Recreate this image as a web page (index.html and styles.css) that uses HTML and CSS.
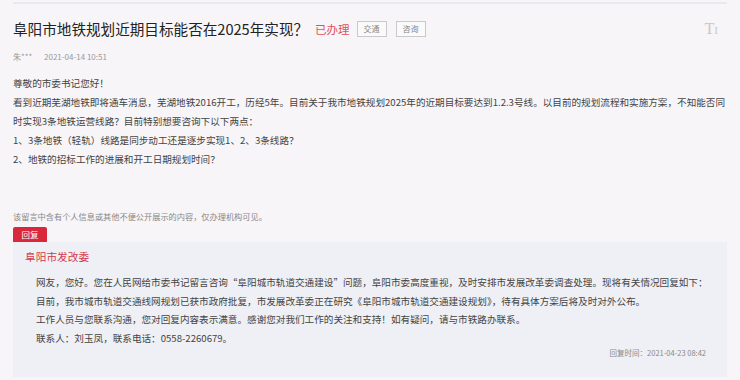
FILE: index.html
```html
<!DOCTYPE html>
<html lang="zh-CN">
<head>
<meta charset="UTF-8" />
<title>阜阳市地铁规划近期目标能否在2025年实现？</title>
<link rel="stylesheet" href="styles.css">
</head>
<body>

<div class="page">
    <div class="topline"></div>

    <div class="head">
        <h1 class="title">阜阳市地铁规划近期目标能否在2025年实现？</h1>
        <span class="status">已办理</span>
        <span class="tag">交通</span>
        <span class="tag">咨询</span>
        <span class="fontsize">T<small>I</small></span>
    </div>

    <div class="meta">
        <span class="author">朱***</span>
        <span class="date">2021-04-14 10:51</span>
    </div>

    <div class="content">
        <p>尊敬的市委书记您好！</p>
        <p>看到近期芜湖地铁即将通车消息，芜湖地铁2016开工，历经5年。目前关于我市地铁规划2025年的近期目标要达到1.2.3号线。以目前的规划流程和实施方案，不知能否同时实现3条地铁运营线路？目前特别想要咨询下以下两点：</p>
        <p>1、3条地铁（轻轨）线路是同步动工还是逐步实现1、2、3条线路？</p>
        <p>2、地铁的招标工作的进展和开工日期规划时间？</p>
    </div>

    <div class="notice">该留言中含有个人信息或其他不便公开展示的内容，仅办理机构可见。</div>

    <div class="tab">回复</div>
    <div class="reply">
        <div class="org">阜阳市发改委</div>
        <div class="reply-text">
            <p>网友，您好。您在人民网给市委书记留言咨询“阜阳城市轨道交通建设”问题，阜阳市委高度重视，及时安排市发展改革委调查处理。现将有关情况回复如下：</p>
            <p>目前，我市城市轨道交通线网规划已获市政府批复，市发展改革委正在研究《阜阳市城市轨道交通建设规划》，待有具体方案后将及时对外公布。</p>
            <p>工作人员与您联系沟通，您对回复内容表示满意。感谢您对我们工作的关注和支持！如有疑问，请与市铁路办联系。</p>
            <p>联系人：刘玉凤，联系电话：0558-2260679。</p>
        </div>
        <div class="reply-time">回复时间：2021-04-23 08:42</div>
    </div>
</div>

</body>
</html>
```

FILE: styles.css
```css
body {
    margin: 0;
    background: #f7f5f8;
    color: #333;
    font-family: "Noto Sans CJK SC", "Noto Sans", sans-serif;
}
.page {
    padding: 0 13px;
}
.topline {
    margin-top: 2px;
    height: 2px;
    background: #ebe9ed;
}
.head {
    display: flex;
    align-items: center;
    margin-top: 15px;
    height: 20px;
}
.title {
    margin: 0;
    font-size: 14.6px;
    font-weight: normal;
    color: #222;
    line-height: 20px;
}
.status {
    margin-left: 7px;
    font-size: 11.5px;
    color: #e2515b;
}
.tag {
    margin-left: 7px;
    padding: 0 6px;
    height: 14px;
    line-height: 14px;
    border: 1px solid #c9c9c9;
    font-size: 8px;
    color: #888;
    background: #fafafa;
}
.tag + .tag {
    margin-left: 9px;
}
.fontsize {
    margin-left: auto;
    margin-right: 9px;
    font-family: "Liberation Serif", serif;
    font-size: 16px;
    color: #c8c8c8;
    line-height: 1;
}
.fontsize small {
    font-size: 11px;
}
.meta {
    margin-top: 11px;
    font-size: 8px;
    line-height: 14px;
    color: #999;
}
.meta .date {
    margin-left: 10px;
}
.content {
    margin-top: 10px;
    font-size: 9.6px;
    line-height: 19px;
    color: #444;
}
.content p {
    margin: 0;
}
.notice {
    margin-top: 40px;
    font-size: 8.2px;
    line-height: 14px;
    color: #888;
}
.tab {
    margin-top: 4px;
    width: 34px;
    height: 15px;
    line-height: 15px;
    text-align: center;
    background: #d9283c;
    color: #fff;
    font-size: 8.5px;
    border-radius: 2px 2px 0 0;
}
.reply {
    background: #eff0f5;
    padding: 7px 12px 18px 23px;
}
.org {
    margin-left: -11px;
    font-size: 10.7px;
    line-height: 16px;
    color: #d43a47;
}
.reply-text {
    margin-top: 8px;
    font-size: 9.6px;
    line-height: 18.5px;
    color: #444;
}
.reply-text p {
    margin: 0;
}
.reply-time {
    text-align: right;
    font-size: 7.5px;
    line-height: 12px;
    color: #888;
    margin-right: 9px;
}
```
